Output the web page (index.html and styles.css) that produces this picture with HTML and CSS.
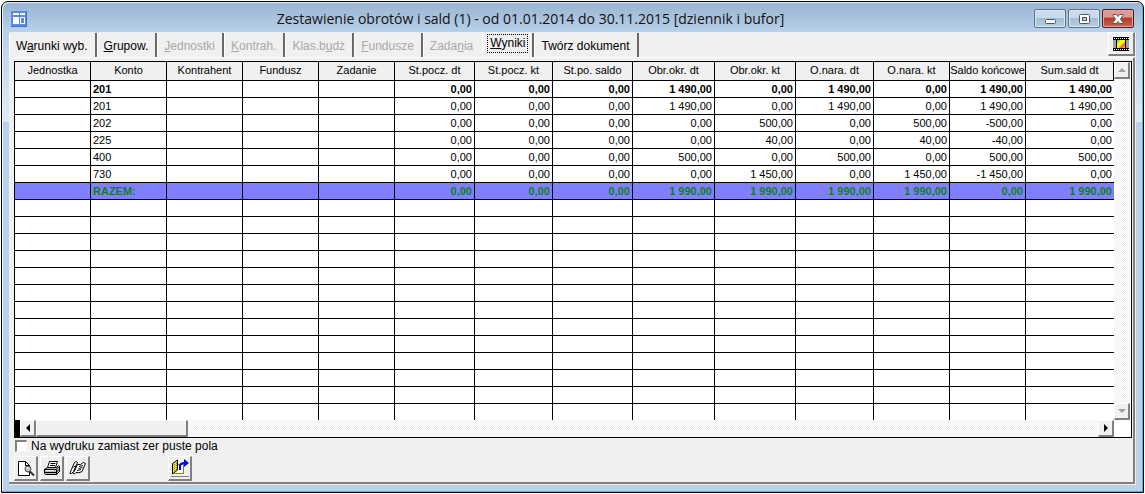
FILE: index.html
```html
<!DOCTYPE html>
<html lang="pl">
<head>
<meta charset="utf-8">
<title>Zestawienie obrotów i sald</title>
<link rel="stylesheet" href="styles.css">
</head>
<body>
<main class="window">
  <header class="titlebar">
    <svg class="app-icon" width="16" height="16" viewBox="0 0 16 16" shape-rendering="crispEdges" aria-hidden="true">
      <path fill="#5b8be0" d="M0 0h16v16H0z"/><path fill="#3f6fc8" d="M0 15h16v1H0zM15 0h1v16h-1z"/>
      <path fill="#fff" d="M2 2h6v2H2zM2 6h6v7H2zM9 2h5v2H9zM9 6h5v7H9z"/>
      <path fill="#5b8be0" d="M10 7h3v5h-3z"/>
    </svg>
    <h1 class="title">Zestawienie obrotów i sald (1) - od 01.01.2014 do 30.11.2015 [dziennik i bufor]</h1>
    <div class="controls">
      <button class="control" type="button" aria-label="Minimalizuj"><svg width="14" height="12" viewBox="0 0 14 12"><rect x="2.5" y="6.5" width="10" height="4" rx="1" fill="#fff" stroke="#53565f"/></svg></button>
      <button class="control" type="button" aria-label="Maksymalizuj"><svg width="14" height="12" viewBox="0 0 14 12"><rect x="2.5" y="1.5" width="10" height="9" rx="1" fill="#fff" stroke="#53565f"/><rect x="5.5" y="4.5" width="4" height="3" fill="#b4cce6" stroke="#53565f"/></svg></button>
      <button class="control close" type="button" aria-label="Zamknij"><svg width="14" height="12" viewBox="0 0 14 12"><path d="M2 1.500h3.500L7 3.500l1.500-2H12v1L9.500 6 12 9.500v1H8.500L7 8.500l-1.500 2H2v-1L4.500 6 2 2.500z" fill="#fff" stroke="#53565f"/></svg></button>
    </div>
  </header>
  <section class="client">
    <div class="tab-row">
      <nav class="tabs">
        <button class="tab" type="button">W<u>a</u>runki wyb.</button>
        <button class="tab" type="button"><u>G</u>rupow.</button>
        <button class="tab" type="button" disabled><u>J</u>ednostki</button>
        <button class="tab" type="button" disabled><u>K</u>ontrah.</button>
        <button class="tab" type="button" disabled>Klas.b<u>u</u>dż</button>
        <button class="tab" type="button" disabled><u>F</u>undusze</button>
        <button class="tab before-active" type="button" disabled>Zada<u>n</u>ia</button>
        <button class="tab active" type="button"><span class="focus"><u>W</u>yniki</span></button>
        <button class="tab" type="button">Twórz dokument</button>
      </nav>
      <button class="tool film" type="button" aria-label="Podgląd">
        <svg width="16" height="14" viewBox="0 0 16 14" shape-rendering="crispEdges">
          <defs><linearGradient id="spectrum" x1="0" y1="0" x2="1" y2="1"><stop offset="0" stop-color="#2c2"/><stop offset=".3" stop-color="#ff0"/><stop offset=".55" stop-color="#fe0"/><stop offset=".75" stop-color="#f3a"/><stop offset="1" stop-color="#ff0"/></linearGradient></defs>
          <path d="M0 0h16v14H0z"/><path fill="#a0a0a0" d="M0 3h3v8H0zM13 3h3v8h-3z"/><path fill="url(#spectrum)" d="M4 3h8v8H4z"/>
          <path stroke="#fff" stroke-dasharray="1 1" d="M1 1.500h15M1 12.500h15"/>
        </svg>
      </button>
    </div>
    <div class="panel">
      <div class="grid">
        <div class="sheet">
          <table class="table">
            <colgroup><col class="w-key" span="5"><col class="w-80"><col class="w-78"><col class="w-80"><col class="w-82"><col class="w-81"><col class="w-78"><col class="w-key" span="2"><col></colgroup>
            <thead><tr><th>Jednostka</th><th>Konto</th><th>Kontrahent</th><th>Fundusz</th><th>Zadanie</th><th>St.pocz. dt</th><th>St.pocz. kt</th><th>St.po. saldo</th><th>Obr.okr. dt</th><th>Obr.okr. kt</th><th>O.nara. dt</th><th>O.nara. kt</th><th>Saldo końcowe</th><th>Sum.sald dt</th></tr></thead>
            <tbody>
              <tr class="bold"><td></td><td class="account">201</td><td></td><td></td><td></td><td>0,00</td><td>0,00</td><td>0,00</td><td>1 490,00</td><td>0,00</td><td>1 490,00</td><td>0,00</td><td>1 490,00</td><td>1 490,00</td></tr>
              <tr><td></td><td class="account">201</td><td></td><td></td><td></td><td>0,00</td><td>0,00</td><td>0,00</td><td>1 490,00</td><td>0,00</td><td>1 490,00</td><td>0,00</td><td>1 490,00</td><td>1 490,00</td></tr>
              <tr><td></td><td class="account">202</td><td></td><td></td><td></td><td>0,00</td><td>0,00</td><td>0,00</td><td>0,00</td><td>500,00</td><td>0,00</td><td>500,00</td><td>-500,00</td><td>0,00</td></tr>
              <tr><td></td><td class="account">225</td><td></td><td></td><td></td><td>0,00</td><td>0,00</td><td>0,00</td><td>0,00</td><td>40,00</td><td>0,00</td><td>40,00</td><td>-40,00</td><td>0,00</td></tr>
              <tr><td></td><td class="account">400</td><td></td><td></td><td></td><td>0,00</td><td>0,00</td><td>0,00</td><td>500,00</td><td>0,00</td><td>500,00</td><td>0,00</td><td>500,00</td><td>500,00</td></tr>
              <tr><td></td><td class="account">730</td><td></td><td></td><td></td><td>0,00</td><td>0,00</td><td>0,00</td><td>0,00</td><td>1 450,00</td><td>0,00</td><td>1 450,00</td><td>-1 450,00</td><td>0,00</td></tr>
              <tr class="bold total"><td></td><td class="account">RAZEM:</td><td></td><td></td><td></td><td>0,00</td><td>0,00</td><td>0,00</td><td>1 990,00</td><td>1 990,00</td><td>1 990,00</td><td>1 990,00</td><td>0,00</td><td>1 990,00</td></tr>
              <tr><td></td><td></td><td></td><td></td><td></td><td></td><td></td><td></td><td></td><td></td><td></td><td></td><td></td><td></td></tr>
              <tr><td></td><td></td><td></td><td></td><td></td><td></td><td></td><td></td><td></td><td></td><td></td><td></td><td></td><td></td></tr>
              <tr><td></td><td></td><td></td><td></td><td></td><td></td><td></td><td></td><td></td><td></td><td></td><td></td><td></td><td></td></tr>
              <tr><td></td><td></td><td></td><td></td><td></td><td></td><td></td><td></td><td></td><td></td><td></td><td></td><td></td><td></td></tr>
              <tr><td></td><td></td><td></td><td></td><td></td><td></td><td></td><td></td><td></td><td></td><td></td><td></td><td></td><td></td></tr>
              <tr><td></td><td></td><td></td><td></td><td></td><td></td><td></td><td></td><td></td><td></td><td></td><td></td><td></td><td></td></tr>
              <tr><td></td><td></td><td></td><td></td><td></td><td></td><td></td><td></td><td></td><td></td><td></td><td></td><td></td><td></td></tr>
              <tr><td></td><td></td><td></td><td></td><td></td><td></td><td></td><td></td><td></td><td></td><td></td><td></td><td></td><td></td></tr>
              <tr><td></td><td></td><td></td><td></td><td></td><td></td><td></td><td></td><td></td><td></td><td></td><td></td><td></td><td></td></tr>
              <tr><td></td><td></td><td></td><td></td><td></td><td></td><td></td><td></td><td></td><td></td><td></td><td></td><td></td><td></td></tr>
              <tr><td></td><td></td><td></td><td></td><td></td><td></td><td></td><td></td><td></td><td></td><td></td><td></td><td></td><td></td></tr>
              <tr><td></td><td></td><td></td><td></td><td></td><td></td><td></td><td></td><td></td><td></td><td></td><td></td><td></td><td></td></tr>
              <tr><td></td><td></td><td></td><td></td><td></td><td></td><td></td><td></td><td></td><td></td><td></td><td></td><td></td><td></td></tr>
            </tbody>
          </table>
        </div>
        <div class="vscroll">
          <button class="scroll-button" type="button" aria-label="W górę"><svg width="8" height="4" viewBox="0 0 8 4"><path fill="#a0a0a0" d="M4 0l4 4H0z"/></svg></button>
          <button class="scroll-button" type="button" aria-label="W dół"><svg width="8" height="4" viewBox="0 0 8 4"><path fill="#a0a0a0" d="M0 0h8L4 4z"/></svg></button>
        </div>
        <div class="hscroll">
          <span class="split"></span>
          <button class="scroll-button" type="button" aria-label="W lewo"><svg width="4" height="8" viewBox="0 0 4 8"><path d="M4 0v8L0 4z"/></svg></button>
          <span class="thumb"></span>
          <button class="scroll-button end" type="button" aria-label="W prawo"><svg width="4" height="8" viewBox="0 0 4 8"><path d="M0 0l4 4-4 4z"/></svg></button>
        </div>
      </div>
      <label class="option"><input class="check" type="checkbox">Na wydruku zamiast zer puste pola</label>
      <div class="toolbar">
        <button class="tool" type="button" aria-label="Podgląd wydruku">
          <svg width="18" height="17" viewBox="0 0 18 17"><path fill="#fff" stroke="#000" d="M1.500 1.500h7l4 4v10h-11z"/><path fill="none" stroke="#000" d="M8.500 1.500v4h4"/><circle cx="11" cy="9" r="3" fill="#c0c0c0" stroke="#444"/><path stroke="#333" stroke-width="2" d="M13 11.500l4 4"/><path stroke="#fff" d="M9.500 8.500l1.500-1"/></svg>
        </button>
        <button class="tool" type="button" aria-label="Drukuj">
          <svg width="18" height="17" viewBox="0 0 18 17"><path fill="#fff" stroke="#000" d="M6.500 1.500h8l-2 6h-8z"/><path stroke="#000" d="M7.500 3.500h5M7 5.500h5"/><path fill="#bbb" stroke="#000" d="M1.500 9.500l3-2h9l2-2 1 1v5l-3 3h-11l-1-1z"/><path fill="none" stroke="#000" d="M1 9.500h12l3-3M1 12.500h12l3-3M13.500 9.500v5M4 14.500h9"/><path stroke="#fff" d="M3 10.500h8"/></svg>
        </button>
        <button class="tool" type="button" aria-label="Dokumenty">
          <svg width="18" height="17" viewBox="0 0 18 17"><g fill="#fff" stroke="#000"><path d="M5.500 2.500l2-1 1 1-4 9-2 2H1l1-3z"/><path d="M8.500 4.500q3 1 6-2l2 1-3.500 8q-3 2-6 1l-1.500 1.500-2-1 2-2z"/><path fill="none" d="M10 6.500l4-1M9.500 8.500l4-1M8 10.500l4-1M4.500 7l2-1"/></g></svg>
        </button>
        <button class="tool exit" type="button" aria-label="Wyjście">
          <svg width="20" height="18" viewBox="0 0 20 18"><path fill="#fff" stroke="#808000" d="M7.500 5.500h6v9h-9"/><path fill="#e8e020" stroke="#000" d="M2.500 4.500l5-3.500v10l-5 4z"/><path stroke="#808000" stroke-dasharray="1 1" d="M4.500 5v8M6.500 4v7"/><path fill="none" stroke="#00f" stroke-width="2" d="M10 11V7q0-3 5-3"/><path fill="#00f" d="M14 0l5 4-5 4z"/><path stroke="#808080" d="M1 17.500h18"/></svg>
        </button>
      </div>
    </div>
  </section>
</main>
</body>
</html>
```
FILE: styles.css
```css
* { box-sizing: border-box; }
body {
  margin: 0;
  height: 100vh;
  padding: 1px;
  display: flex;
  font: 12px/14px "Liberation Sans", Arial, sans-serif;
  color: #000;
  background: #fff;
}
button { margin: 0; padding: 0; font: inherit; color: inherit; border: 0; }
svg { display: block; }

.window {
  flex: 1;
  min-width: 0;
  display: flex;
  flex-direction: column;
  padding: 0 7px 7px;
  border: 1px solid #000;
  border-radius: 7px 7px 0 0;
  background: linear-gradient(#98b3d1 0, #b9d1ea 30px, #e0ebf6 120px, #b9d1ea 120px);
  box-shadow: inset -1px -1px #3cc0e0, inset 1px 1px #eaf2fa;
}
.titlebar { height: 30px; display: flex; align-items: center; padding: 3px 2px 0; }
.title {
  flex: 1;
  margin: 0;
  text-align: center;
  font: 14px/20px "Open Sans", "Noto Sans", sans-serif;
  white-space: nowrap;
  color: #111;
}
.controls { display: flex; gap: 2px; }
.control {
  width: 32px;
  height: 19px;
  display: flex;
  align-items: center;
  justify-content: center;
  border: 1px solid #5e7187;
  border-radius: 2px;
  background: linear-gradient(#c9daec 0 45%, #a3bcd6 50%, #b8cfe6);
  box-shadow: inset 0 0 0 1px #d8e6f4;
}
.control.close {
  border-color: #4a1a20;
  background: linear-gradient(#dc9a90 0 40%, #b83c2a 50%, #c86450);
  box-shadow: inset 0 0 0 1px #e0a59c;
}

.client {
  flex: 1;
  min-height: 0;
  display: flex;
  flex-direction: column;
  padding: 0 1px 1px 0;
  background: #f0f0f0;
  border-radius: 2px 2px 0 0;
}
.tab-row { height: 25px; display: flex; justify-content: space-between; align-items: flex-start; }
.tabs { display: flex; height: 25px; }
.tab {
  height: 24px;
  margin-top: 1px;
  padding: 1px 7px 0 6px;
  border-left: 1px solid #fff;
  border-right: 2px solid #696969;
  background: none;
  white-space: nowrap;
}
.tab:disabled { color: #a8a8a8; }
.tab.before-active { border-right: 0; padding-right: 9px; }
.tab.active { padding: 0 4px 3px; }
.focus { display: block; padding: 1px 2px 2px; border: 1px dotted #000; }

.panel {
  flex: 1;
  min-height: 0;
  display: flex;
  flex-direction: column;
  padding: 3px 1px 0 5px;
  border-top: 1px solid #fff;
  border-right: 2px solid #808080;
  border-bottom: 2px solid #808080;
}
.grid {
  flex: 1;
  min-height: 0;
  display: grid;
  grid-template-columns: minmax(0, 1fr) 17px;
  grid-template-rows: minmax(0, 1fr) 17px;
  border: 1px solid #000;
  background: #fff;
}
.sheet { overflow: hidden; }
.table {
  width: 100%;
  table-layout: fixed;
  border-collapse: separate;
  border-spacing: 0;
  font-size: 11px;
  line-height: 14px;
}
.w-key { width: 76px; }
.w-78 { width: 78px; }
.w-80 { width: 80px; }
.w-81 { width: 81px; }
.w-82 { width: 82px; }
.table th, .table td {
  height: 17px;
  padding: 0 2px 1px;
  border: solid #000;
  border-width: 0 1px 1px 0;
  overflow: hidden;
  white-space: nowrap;
  text-align: right;
}
.table th { height: 19px; padding: 0 0 2px; background: #f0f0f0; font-weight: normal; text-align: center; }
.table .account { text-align: left; }
.table td:last-child { border-right: 0; }
.table tbody tr:last-child td { border-bottom: 0; }
.bold { font-weight: bold; }
.total { color: #108010; background: #8080ff; }

.vscroll, .hscroll {
  display: flex;
  background: repeating-conic-gradient(#fff 0 25%, #f0f0f0 0 50%) 0 0 / 2px 2px;
}
.vscroll { flex-direction: column; justify-content: space-between; border-right: 1px solid #fff; }
.hscroll { grid-column: 1 / 3; border-right: 17px solid #fff; }
.split { width: 5px; background: #000; }
.scroll-button, .thumb, .tool {
  background: #f0f0f0;
  border: solid;
  border-width: 1px 2px 2px 1px;
  border-color: #fff #808080 #808080 #fff;
}
.scroll-button { width: 16px; height: 17px; display: grid; place-items: center; }
.scroll-button.end { margin-left: auto; }
.thumb { width: 152px; }

.option { display: flex; align-items: center; gap: 4px; padding: 1px 0 0 1px; align-self: flex-start; }
.check {
  appearance: none;
  width: 12px;
  height: 12px;
  margin: 0;
  border: solid;
  border-width: 2px 1px 1px 2px;
  border-color: #808080 #f8f8f8 #f8f8f8 #808080;
  background: #fff;
}
.toolbar { display: flex; gap: 2px; padding: 3px 0 1px; }
.tool { width: 24px; height: 25px; display: grid; place-items: center; }
.tool.film { width: 27px; height: 24px; }
.tool.exit { margin-left: 76px; }
```
